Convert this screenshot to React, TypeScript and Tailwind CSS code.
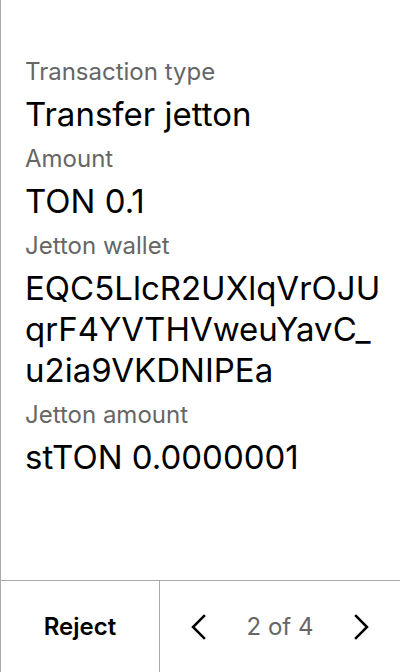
import React from 'react';

const Field: React.FC<{ label: string; lines: string[] }> = ({ label, lines }) => (
  <div className="flex flex-col gap-[7px]">
    <div className="text-[24px] leading-[30px] text-[#666666]">{label}</div>
    <div className="text-[33px] leading-[41px] text-black whitespace-nowrap">
      {lines.map((l, i) => (
        <div key={i}>{l}</div>
      ))}
    </div>
  </div>
);

const Chevron: React.FC<{ dir: 'left' | 'right' }> = ({ dir }) => (
  <svg width="16" height="26" viewBox="0 0 16 26" fill="none">
    <polyline
      points={dir === 'left' ? '14,2 3,13 14,24' : '2,2 13,13 2,24'}
      stroke="#000"
      strokeWidth="2.5"
      strokeLinecap="square"
    />
  </svg>
);

export default function App() {
  const fields = [
    { label: 'Transaction type', lines: ['Transfer jetton'] },
    { label: 'Amount', lines: ['TON 0.1'] },
    { label: 'Jetton wallet', lines: ['EQC5LlcR2UXlqVrOJU', 'qrF4YVTHVweuYavC_', 'u2ia9VKDNIPEa'] },
    { label: 'Jetton amount', lines: ['stTON 0.0000001'] },
  ];

  return (
    <div
      className="w-[400px] h-[672px] flex flex-col bg-white border-l border-[#aaaaaa]"
      style={{ fontFamily: 'Inter, "Noto Sans", sans-serif' }}
    >
      <div className="flex-1 flex flex-col gap-[9px] pt-[57px] pl-[24px] pr-[16px]">
        {fields.map((f, i) => (
          <Field key={i} label={f.label} lines={f.lines} />
        ))}
      </div>
      <div className="h-[92px] flex border-t border-[#aaaaaa]">
        <div className="w-[159px] flex items-center justify-center border-r border-[#aaaaaa] text-[24px] font-semibold text-black">
          Reject
        </div>
        <div className="flex-1 flex items-center justify-between px-[30px]">
          <Chevron dir="left" />
          <span className="text-[24px] text-[#666666]">2 of 4</span>
          <Chevron dir="right" />
        </div>
      </div>
    </div>
  );
}
